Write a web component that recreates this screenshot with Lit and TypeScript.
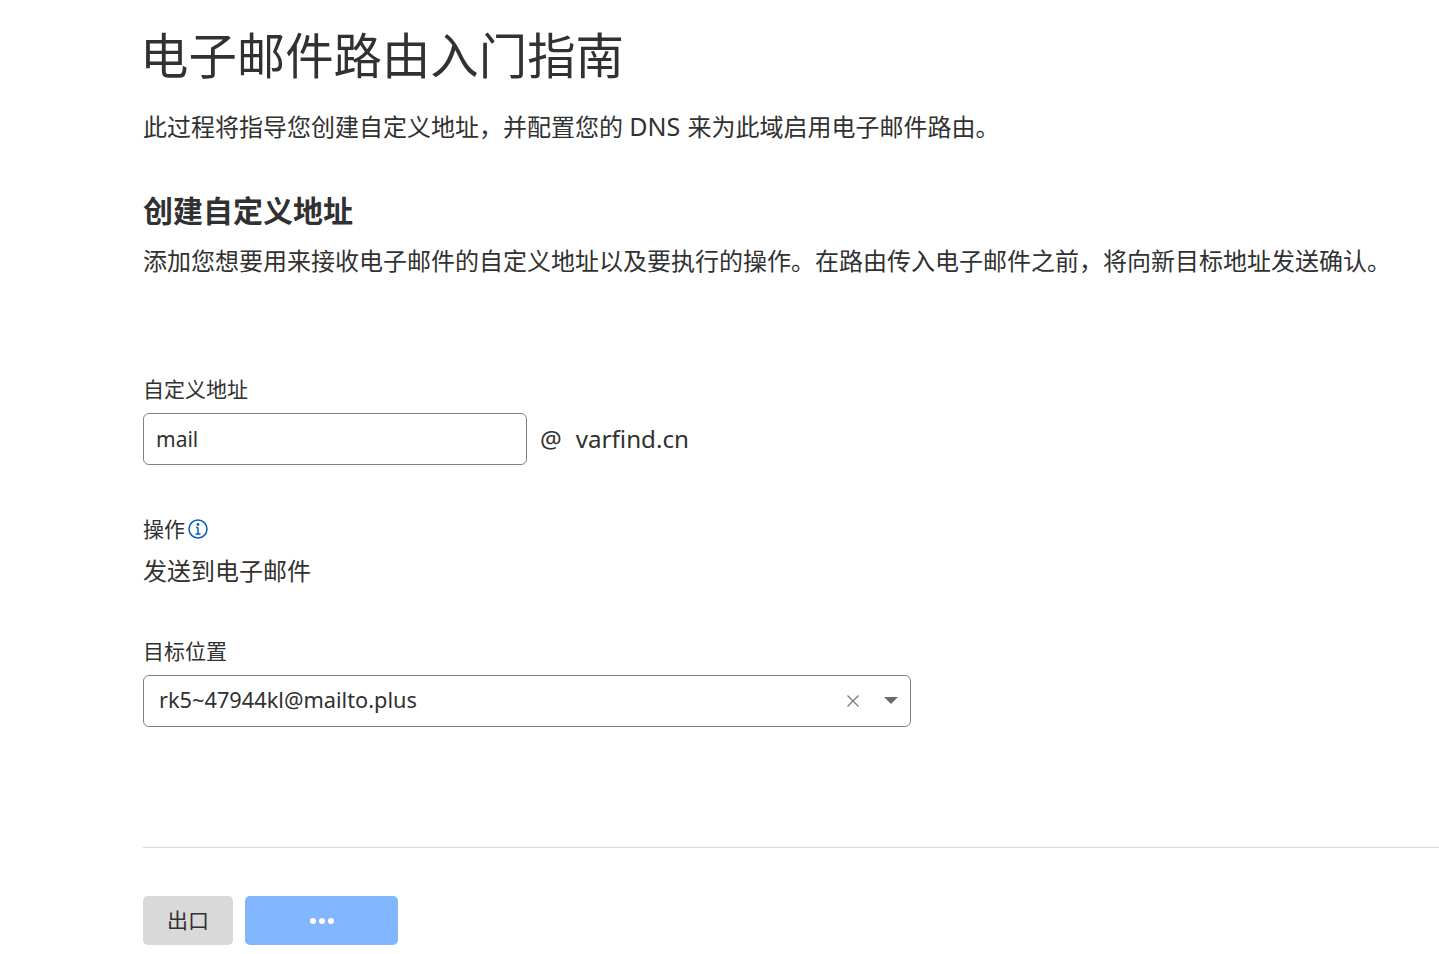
import { LitElement, html, css } from "lit";
import { customElement } from "lit/decorators.js";

@customElement("app-root")
export class AppRoot extends LitElement {
  static styles = css`
    :host {
      display: block;
      height: 954px;
      overflow: hidden;
      background: #fff;
      color: #313131;
      font-family: "Noto Sans", "Noto Sans CJK SC", sans-serif;
    }
    .page { padding: 23px 0 0 143px; }
    h1 { margin: 0 0 0 -3px; font-size: 48.4px; font-weight: 400; line-height: 64px; }
    .intro { margin: 23px 0 0; font-size: 24px; line-height: 34px; }
    .latin { font-size: 25px; line-height: 0; margin-right: 1px; }
    h2 { margin: 46px 0 0; font-size: 30px; line-height: 42px; font-weight: 700; }
    .desc { margin: 12px 0 0; font-size: 24px; line-height: 34px; white-space: nowrap; }
    label { display: flex; align-items: center; gap: 3px; font-size: 21px; line-height: 28px; }
    .f1 { margin-top: 97px; }
    .row { display: flex; align-items: center; margin-top: 10px; }
    .input { box-sizing: border-box; width: 384px; height: 52px; border: 1px solid #808080; border-radius: 6px; padding-left: 12px; display: flex; align-items: center; font-size: 21px; }
    .suffix { margin-left: 13px; font-size: 24.2px; display: flex; gap: 14px; padding-bottom: 2px; }
    .f2 { margin-top: 50px; }
    .value { font-size: 24px; line-height: 34px; margin-top: 11px; }
    .f3 { margin-top: 49px; }
    .select { box-sizing: border-box; width: 768px; height: 52px; border: 1px solid #808080; border-radius: 6px; padding: 0 12px 0 15px; display: flex; align-items: center; font-size: 21.75px; margin-top: 10px; }
    .select span { flex: 1; padding-bottom: 3px; }
    .x { margin-right: 24px; display: block; }
    .arrow { display: block; margin-top: -1px; }
    hr { border: 0; border-top: 1px solid #d9d9d9; margin: 120px 0 0; }
    .btns { display: flex; gap: 12px; margin-top: 48px; }
    .btn { height: 49px; border-radius: 5px; display: flex; align-items: center; justify-content: center; }
    .exit { box-sizing: border-box; width: 90px; background: #d9d9d9; font-size: 21px; padding-bottom: 3px; }
    .go { width: 153px; background: #82b6ff; gap: 3px; }
    .go i { width: 6px; height: 6px; border-radius: 50%; background: #fff; display: block; }
  `;
  render() {
    return html`<div class="page">
      <h1>电子邮件路由入门指南</h1>
      <p class="intro">此过程将指导您创建自定义地址，并配置您的 <span class="latin">DNS</span> 来为此域启用电子邮件路由。</p>
      <h2>创建自定义地址</h2>
      <p class="desc">添加您想要用来接收电子邮件的自定义地址以及要执行的操作。在路由传入电子邮件之前，将向新目标地址发送确认。</p>
      <label class="f1">自定义地址</label>
      <div class="row"><div class="input">mail</div><div class="suffix"><span>@</span><span>varfind.cn</span></div></div>
      <label class="f2">操作
        <svg width="20" height="20" viewBox="0 0 20 20" fill="none" stroke="#0a5cc2" stroke-width="1.5"><circle cx="10" cy="10" r="9"/><path d="M10 8.5V15M7.5 15h5M8 8.5H10"/><circle cx="10" cy="5.5" r=".7"/></svg>
      </label>
      <div class="value">发送到电子邮件</div>
      <label class="f3">目标位置</label>
      <div class="select"><span>rk5~47944kl@mailto.plus</span>
        <svg class="x" width="14" height="14" viewBox="0 0 14 14" stroke="#757575" stroke-width="1.2"><path d="M1.5 1.5l11 11M12.5 1.5l-11 11"/></svg>
        <svg class="arrow" width="14" height="8" viewBox="0 0 14 8"><path d="M0 0h14L7 7z" fill="#6a6d70"/></svg>
      </div>
      <hr />
      <div class="btns"><div class="btn exit">出口</div><div class="btn go"><i></i><i></i><i></i></div></div>
    </div>`;
  }
}
